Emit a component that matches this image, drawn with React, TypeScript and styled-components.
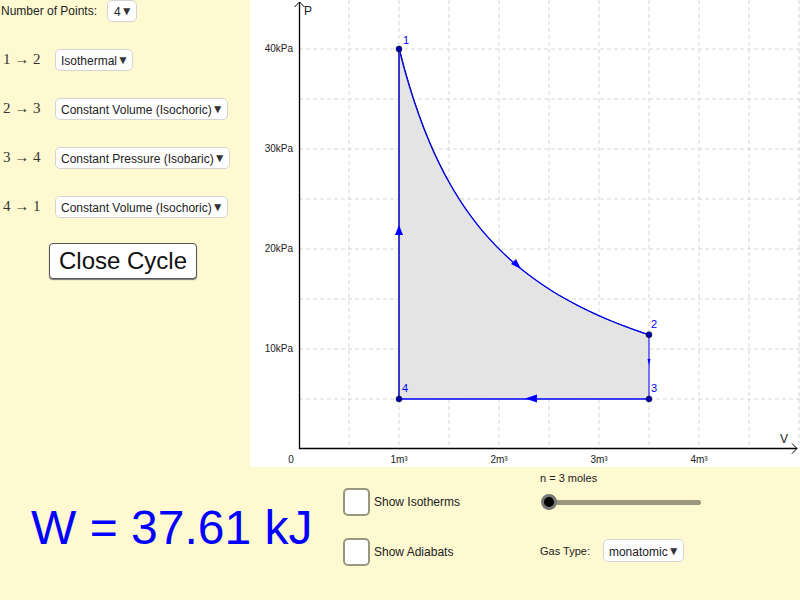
import React from "react";
import styled, { createGlobalStyle } from "styled-components";

const Global = createGlobalStyle`
  body { margin: 0; font-family: "Liberation Sans", Arial, sans-serif; }
`;

const Page = styled.div`
  width: 800px;
  height: 600px;
  background: #fef9d0;
  display: flex;
  flex-direction: column;
  overflow: hidden;
`;

const Top = styled.div`
  display: flex;
  height: 467px;
`;

const Left = styled.div`
  width: 250px;
  display: flex;
  flex-direction: column;
`;

const PointsRow = styled.div`
  display: flex;
  align-items: center;
  height: 22px;
  padding-left: 1px;
  font-size: 12px;
  color: #222;
  gap: 10px;
`;

const Row = styled.div`
  display: flex;
  align-items: center;
  height: 23px;
  margin-top: ${p => p.$top}px;
  padding-left: 3px;
`;

const Arrow = styled.span`
  width: 52px;
  font-family: "Liberation Serif", "DejaVu Serif", serif;
  font-size: 15px;
  color: #333;
`;

const Select = styled.div`
  display: inline-flex;
  align-items: center;
  height: 22px;
  padding: 2px 3px 0 5px;
  background: #fff;
  border: 1px solid #d4d4d4;
  border-radius: 5px;
  font-size: 12px;
  color: #222;
  box-sizing: border-box;
  &::after {
    content: "▼";
    font-size: 12px;
    color: #333;
    margin-top: -2px;
  }
`;

const CloseBtn = styled.div`
  margin: 25px 0 0 49px;
  width: 148px;
  height: 36px;
  box-sizing: border-box;
  background: #fff;
  border: 1px solid #555;
  border-radius: 4px;
  box-shadow: 0 1px 1px #777;
  font-size: 24px;
  color: #111;
  display: flex;
  align-items: center;
  justify-content: center;
`;

const Graph = styled.div`
  width: 550px;
  height: 467px;
  background: #fff;
`;

const Bottom = styled.div`
  flex: 1;
  display: flex;
`;

const Work = styled.div`
  width: 343px;
  padding-left: 31px;
  box-sizing: border-box;
  display: flex;
  align-items: center;
  font-size: 48px;
  color: #0000ff;
  padding-bottom: 13px;
`;

const Checks = styled.div`
  width: 197px;
  display: flex;
  flex-direction: column;
  gap: 22px;
  padding-top: 21px;
`;

const CheckRow = styled.div`
  display: flex;
  align-items: center;
  gap: 4px;
  font-size: 12px;
  color: #222;
`;

const Box = styled.div`
  width: 27px;
  height: 28px;
  box-sizing: border-box;
  background: #fff;
  border: 2px solid #99987f;
  border-radius: 5px;
`;

const Controls = styled.div`
  display: flex;
  flex-direction: column;
  padding-top: 5px;
`;

const SmallLabel = styled.div`
  font-size: 11px;
  color: #222;
`;

const Slider = styled.div`
  position: relative;
  margin: 10px 0 0 1px;
  width: 160px;
  height: 16px;
  display: flex;
  align-items: center;
`;

const Track = styled.div`
  margin-left: 8px;
  width: 153px;
  height: 5px;
  border-radius: 3px;
  background: #99987f;
`;

const Knob = styled.div`
  position: absolute;
  left: 0;
  top: 0;
  width: 16px;
  height: 16px;
  box-sizing: border-box;
  border-radius: 50%;
  background: #000;
  border: 3px solid #777;
`;

const GasRow = styled.div`
  display: flex;
  align-items: center;
  gap: 13px;
  margin-top: 29px;
  height: 23px;
`;

const gx = (v: number) => 299 + 100 * v;
const gy = (p: number) => 449 - 10 * p;

function PVGraph() {
  const vGrid = [];
  for (let x = 349; x <= 800; x += 50) vGrid.push(x);
  const hGrid = [];
  for (let y = 399; y >= 0; y -= 50) hGrid.push(y);

  const curve: string[] = [];
  for (let i = 0; i <= 50; i++) {
    const v = 1 + (2.5 * i) / 50;
    curve.push(`${gx(v).toFixed(2)},${gy(40 / v).toFixed(2)}`);
  }
  const fill = `${gx(1)},${gy(5)} ${curve.join(" ")} ${gx(3.5)},${gy(5)}`;
  const lbl = { fontSize: 10, fill: "#222", fontFamily: "Liberation Sans, Arial, sans-serif" };
  const blue = "#0000ff";

  return (
    <svg width="550" height="467" viewBox="250 0 550 467">
      {vGrid.map(x => (
        <line key={"v" + x} x1={x} y1={0} x2={x} y2={448} stroke="#d6d6d6" strokeDasharray="4 3" />
      ))}
      {hGrid.map(y => (
        <line key={"h" + y} x1={299} y1={y} x2={800} y2={y} stroke="#d6d6d6" strokeDasharray="4 3" />
      ))}
      <polygon points={fill} fill="#e4e4e4" />
      <line x1={299} y1={448.5} x2={797} y2={448.5} stroke="#000" strokeWidth={1.3} />
      <polyline points="792,443.5 797,448.5 792,453.5" fill="none" stroke="#000" />
      <line x1={299.5} y1={2} x2={299.5} y2={449} stroke="#000" strokeWidth={1.3} />
      <polyline points="294.5,7 299.5,2 304.5,7" fill="none" stroke="#000" />
      <text x={304} y={15} style={{ ...lbl, fontSize: 12 }}>P</text>
      <text x={780} y={443} style={{ ...lbl, fontSize: 12 }}>V</text>
      {[10, 20, 30, 40].map(p => (
        <text key={p} x={293} y={gy(p) + 3} textAnchor="end" style={lbl}>{p}kPa</text>
      ))}
      <text x={291} y={463} textAnchor="middle" style={lbl}>0</text>
      {[1, 2, 3, 4].map(v => (
        <text key={v} x={gx(v)} y={463} textAnchor="middle" style={lbl}>{v}m³</text>
      ))}
      <polyline points={curve.join(" ")} fill="none" stroke="#222" strokeWidth={1} transform="translate(0.6,0.4)" />
      <polyline points={curve.join(" ")} fill="none" stroke={blue} strokeWidth={1.2} />
      <line x1={gx(1)} y1={gy(5)} x2={gx(1)} y2={gy(40)} stroke="#3a3ac8" strokeWidth={2} />
      <line x1={gx(3.5)} y1={gy(40 / 3.5)} x2={gx(3.5)} y2={gy(5)} stroke={blue} strokeWidth={1} />
      <line x1={gx(3.5)} y1={gy(5)} x2={gx(1)} y2={gy(5)} stroke={blue} strokeWidth={1.5} />
      <polygon points="399,225 395,235 403,235" fill={blue} />
      <polygon points="525,398.5 537,394.5 537,402.5" fill={blue} />
      <polygon points="521,269 511,264 516,259" fill={blue} />
      <polygon points="649,365 647.5,359 650.5,359" fill={blue} />
      {[
        [1, 40, "1", 403, 44],
        [3.5, 40 / 3.5, "2", 651, 328],
        [3.5, 5, "3", 651, 392],
        [1, 5, "4", 402, 392],
      ].map(([v, p, n, tx, ty]) => (
        <g key={n as string}>
          <circle cx={gx(v as number)} cy={gy(p as number)} r={3} fill="#0000aa" stroke="#000" strokeWidth={0.5} />
          <text x={tx as number} y={ty as number} style={{ ...lbl, fontSize: 11, fill: blue }}>{n}</text>
        </g>
      ))}
    </svg>
  );
}

export default function App() {
  return (
    <Page>
      <Global />
      <Top>
        <Left>
          <PointsRow>
            Number of Points:
            <Select style={{ paddingLeft: 6 }}>4</Select>
          </PointsRow>
          <Row $top={26}>
            <Arrow>1 → 2</Arrow>
            <Select>Isothermal</Select>
          </Row>
          <Row $top={26}>
            <Arrow>2 → 3</Arrow>
            <Select>Constant Volume (Isochoric)</Select>
          </Row>
          <Row $top={26}>
            <Arrow>3 → 4</Arrow>
            <Select>Constant Pressure (Isobaric)</Select>
          </Row>
          <Row $top={26}>
            <Arrow>4 → 1</Arrow>
            <Select>Constant Volume (Isochoric)</Select>
          </Row>
          <CloseBtn>Close Cycle</CloseBtn>
        </Left>
        <Graph>
          <PVGraph />
        </Graph>
      </Top>
      <Bottom>
        <Work>W = 37.61 kJ</Work>
        <Checks>
          <CheckRow><Box />Show Isotherms</CheckRow>
          <CheckRow><Box />Show Adiabats</CheckRow>
        </Checks>
        <Controls>
          <SmallLabel>n = 3 moles</SmallLabel>
          <Slider>
            <Track />
            <Knob />
          </Slider>
          <GasRow>
            <SmallLabel>Gas Type:</SmallLabel>
            <Select style={{ height: 23 }}>monatomic</Select>
          </GasRow>
        </Controls>
      </Bottom>
    </Page>
  );
}
